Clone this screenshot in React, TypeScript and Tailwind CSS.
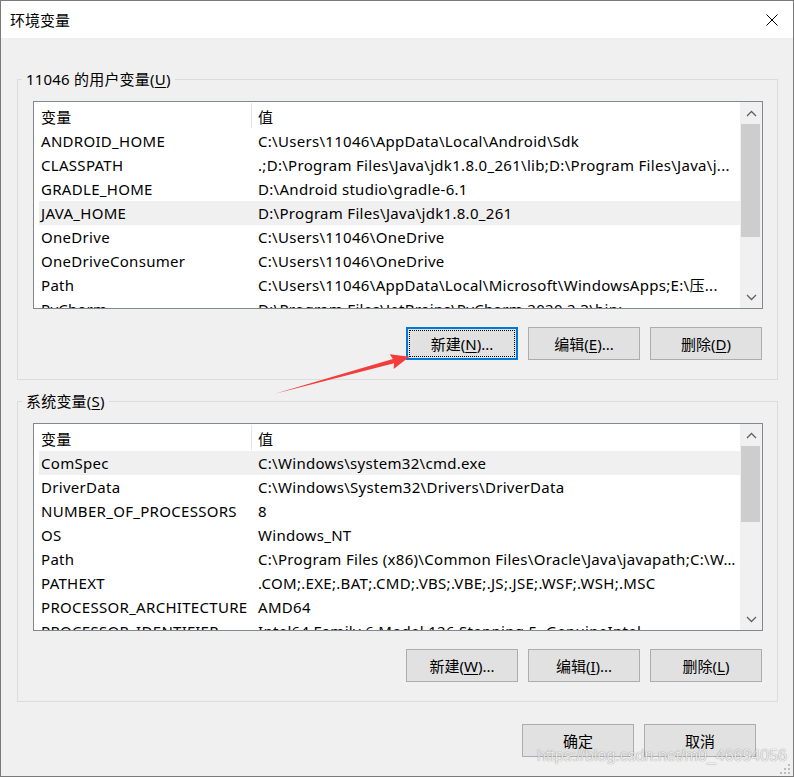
import React from "react";

type Row = { name: string; value: string };

const userVars: Row[] = [
  { name: "ANDROID_HOME", value: "C:\\Users\\11046\\AppData\\Local\\Android\\Sdk" },
  { name: "CLASSPATH", value: ".;D:\\Program Files\\Java\\jdk1.8.0_261\\lib;D:\\Program Files\\Java\\j..." },
  { name: "GRADLE_HOME", value: "D:\\Android studio\\gradle-6.1" },
  { name: "JAVA_HOME", value: "D:\\Program Files\\Java\\jdk1.8.0_261" },
  { name: "OneDrive", value: "C:\\Users\\11046\\OneDrive" },
  { name: "OneDriveConsumer", value: "C:\\Users\\11046\\OneDrive" },
  { name: "Path", value: "C:\\Users\\11046\\AppData\\Local\\Microsoft\\WindowsApps;E:\\压..." },
  { name: "PyCharm", value: "D:\\Program Files\\JetBrains\\PyCharm 2020.2.3\\bin;" },
];

const sysVars: Row[] = [
  { name: "ComSpec", value: "C:\\Windows\\system32\\cmd.exe" },
  { name: "DriverData", value: "C:\\Windows\\System32\\Drivers\\DriverData" },
  { name: "NUMBER_OF_PROCESSORS", value: "8" },
  { name: "OS", value: "Windows_NT" },
  { name: "Path", value: "C:\\Program Files (x86)\\Common Files\\Oracle\\Java\\javapath;C:\\W..." },
  { name: "PATHEXT", value: ".COM;.EXE;.BAT;.CMD;.VBS;.VBE;.JS;.JSE;.WSF;.WSH;.MSC" },
  { name: "PROCESSOR_ARCHITECTURE", value: "AMD64" },
  { name: "PROCESSOR_IDENTIFIER", value: "Intel64 Family 6 Model 126 Stepping 5, GenuineIntel" },
];

const Chevron = ({ down }: { down?: boolean }) => (
  <svg width="11" height="7" viewBox="0 0 11 7" className={down ? "rotate-180" : ""}>
    <path d="M1 6 L5.5 1.5 L10 6" fill="none" stroke="#606060" strokeWidth="1.3" />
  </svg>
);

const VarList = ({ rows, selected, thumb }: { rows: Row[]; selected: number; thumb: number }) => (
  <div className="w-[730px] h-[208px] border border-[#828790] bg-white flex tracking-[0.3px]">
    <div className="flex-1 pl-[5px] overflow-hidden">
      <div className="h-[27px] flex items-start pt-[1px]">
        <div className="w-[212px] pl-[2px] leading-[24px] pt-[2px]">变量</div>
        <div className="h-[25px] border-l border-[#e5e5e5] pl-[6px] leading-[24px] pt-[2px]">值</div>
      </div>
      {rows.map((r, i) => (
        <div
          key={r.name}
          className={`h-[24px] flex items-center leading-[24px] whitespace-nowrap ${i === selected ? "bg-[#f0f0f0]" : ""}`}
        >
          <div className="w-[212px] shrink-0 pl-[2px] overflow-hidden">{r.name}</div>
          <div className="flex-1 min-w-0 pl-[7px] pr-[4px] overflow-hidden text-ellipsis">{r.value}</div>
        </div>
      ))}
    </div>
    <div className="w-[22px] shrink-0 bg-[#f0f0f0] flex flex-col">
      <div className="h-[22px] flex items-center justify-center">
        <Chevron />
      </div>
      <div className="ml-[1px] w-[19px] bg-[#cdcdcd]" style={{ height: thumb }} />
      <div className="flex-1" />
      <div className="h-[22px] flex items-center justify-center">
        <Chevron down />
      </div>
    </div>
  </div>
);

const Btn = ({ text, hot, tail = "", focused }: { text: string; hot?: string; tail?: string; focused?: boolean }) => (
  <button
    className={`h-[33px] w-[112px] bg-[#e1e1e1] text-[15px] text-black flex items-center justify-center leading-[20px] ${
      focused
        ? "border-2 border-[#0078d7] outline outline-1 outline-dotted outline-black outline-offset-[-4px]"
        : "border border-[#adadad]"
    }`}
  >
    {text}
    {hot && (
      <>
        (<u className="underline-offset-2">{hot}</u>)
      </>
    )}
    {tail}
  </button>
);

const Group = ({ title, hot, children, top }: { title: string; hot: string; children: React.ReactNode; top: string }) => (
  <fieldset className={`w-[761px] border border-[#dcdcdc] ${top}`}>
    <legend className="ml-[4px] px-[4px] text-[15px] leading-[20px] tracking-[0.2px]">
      {title}(<u className="underline-offset-2">{hot}</u>)
    </legend>
    <div className="pl-[15px]">{children}</div>
  </fieldset>
);

export default function App() {
  return (
    <div className="relative w-[794px] h-[777px] border border-[#7a7a7a] bg-[#f0f0f0] flex flex-col text-[15px] text-black font-['Noto_Sans','Noto_Sans_CJK_SC',sans-serif]">
      <div className="h-[37px] bg-white flex items-center justify-between pl-[9px] pr-[15px]">
        <span className="leading-[20px]">环境变量</span>
        <svg width="12" height="12" viewBox="0 0 12 12">
          <path d="M0.5 0.5 L11.5 11.5 M11.5 0.5 L0.5 11.5" stroke="#000" strokeWidth="1" />
        </svg>
      </div>

      <div className="pl-[16px] pt-[31px] flex flex-col">
        <Group title="11046 的用户变量" hot="U" top="pt-[12px] pb-[19px]">
          <VarList rows={userVars} selected={3} thumb={113} />
          <div className="w-[730px] mt-[18px] pr-[1px] flex justify-end gap-[10px]">
            <Btn text="新建" hot="N" tail="..." focused />
            <Btn text="编辑" hot="E" tail="..." />
            <Btn text="删除" hot="D" />
          </div>
        </Group>

        <Group title="系统变量" hot="S" top="mt-[11px] pt-[12px] pb-[19px]">
          <VarList rows={sysVars} selected={0} thumb={76} />
          <div className="w-[730px] mt-[18px] pr-[1px] flex justify-end gap-[10px]">
            <Btn text="新建" hot="W" tail="..." />
            <Btn text="编辑" hot="I" tail="..." />
            <Btn text="删除" hot="L" />
          </div>
        </Group>
      </div>

      <div className="mt-[22px] pr-[37px] flex justify-end gap-[10px]">
        <Btn text="确定" />
        <Btn text="取消" />
      </div>

      {/* annotation arrow */}
      <svg className="absolute -left-px -top-px pointer-events-none" width="794" height="777" viewBox="0 0 794 777">
        <polygon
          points="274,394 392.9,358.9 389.7,354.2 409.5,356.8 393.6,368.9 394.1,363.3"
          fill="#f33c3c"
        />
      </svg>

      <div className="absolute left-[536px] top-[745px] text-[16px] leading-[20px] font-['Liberation_Sans',Arial,sans-serif] text-white/85 [text-shadow:0_0_1px_rgba(0,0,0,0.55)] pointer-events-none">
        https://blog.csdn.net/m0_46694056
      </div>

      <svg className="absolute left-[778px] top-[762px]" width="12" height="12" viewBox="0 0 12 12">
        <g fill="#bcbcbc">
          <rect x="9" y="1" width="2" height="2" />
          <rect x="5" y="5" width="2" height="2" />
          <rect x="9" y="5" width="2" height="2" />
          <rect x="1" y="9" width="2" height="2" />
          <rect x="5" y="9" width="2" height="2" />
          <rect x="9" y="9" width="2" height="2" />
        </g>
      </svg>
    </div>
  );
}
